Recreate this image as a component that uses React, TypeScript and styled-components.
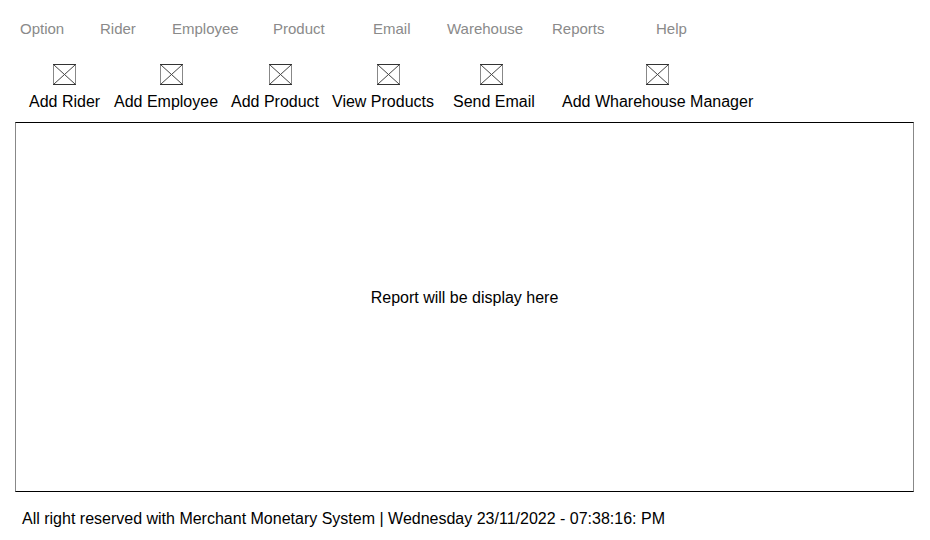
import React from "react";
import styled, { createGlobalStyle } from "styled-components";

const Global = createGlobalStyle`
  html, body { margin: 0; padding: 0; background: #ffffff; }
  body { font-family: "Liberation Sans", Arial, sans-serif; color: #000; }
`;

const Page = styled.div`
  width: 930px;
  height: 540px;
  display: flex;
  flex-direction: column;
  box-sizing: border-box;
  padding-top: 20px;
`;

const MenuBar = styled.nav`
  display: grid;
  grid-template-columns: 80px 72px 101px 100px 74px 105px 104px auto;
  padding-left: 20px;
  font-size: 15px;
  line-height: 17px;
  color: #8a8a8a;
`;

const MenuItem = styled.span`
  white-space: nowrap;
`;

const Toolbar = styled.div`
  display: grid;
  grid-template-columns: 85px 117px 101px 121px 109px auto;
  padding-left: 29px;
  margin-top: 27px;
`;

const ToolButton = styled.div`
  justify-self: start;
  display: flex;
  flex-direction: column;
  align-items: center;
  gap: 8px;
  cursor: default;
`;

const IconWrap = styled.div<{ $dx: number }>`
  width: 23px;
  height: 21px;
  margin-left: ${(p) => (p.$dx > 0 ? p.$dx * 2 : 0)}px;
  margin-right: ${(p) => (p.$dx < 0 ? -p.$dx * 2 : 0)}px;
  display: flex;
`;

const Label = styled.span`
  font-size: 16px;
  line-height: 18px;
  white-space: nowrap;
`;

const ReportBox = styled.section`
  margin: 11px 0 0 15px;
  width: 899px;
  height: 370px;
  box-sizing: border-box;
  border-top: 1px solid #000;
  border-bottom: 1px solid #000;
  border-left: 1px solid #888;
  border-right: 1px solid #888;
  display: flex;
  align-items: center;
  justify-content: center;
  padding-bottom: 18px;
  font-size: 16px;
  line-height: 18px;
`;

const Footer = styled.footer`
  margin: 18px 0 0 22px;
  font-size: 16px;
  line-height: 18px;
  white-space: nowrap;
`;

const BrokenImage = () => (
  <svg width="23" height="21" viewBox="0 0 23 21" fill="none">
    <path d="M0.5 0 V21 M22.5 0 V21" stroke="#888" strokeWidth="1" />
    <path d="M0 0.5 H23 M0 20.5 H23" stroke="#333" strokeWidth="1" />
    <path d="M1 1 L22 20 M22 1 L1 20" stroke="#444" strokeWidth="1" />
  </svg>
);

const menu = ["Option", "Rider", "Employee", "Product", "Email", "Warehouse", "Reports", "Help"];

const tools: { label: string; dx: number }[] = [
  { label: "Add Rider", dx: 0 },
  { label: "Add Employee", dx: 5 },
  { label: "Add Product", dx: 5 },
  { label: "View Products", dx: 6 },
  { label: "Send Email", dx: -2 },
  { label: "Add Wharehouse Manager", dx: 0 },
];

export default function App() {
  return (
    <>
      <Global />
      <Page>
        <MenuBar>
          {menu.map((m) => (
            <MenuItem key={m}>{m}</MenuItem>
          ))}
        </MenuBar>
        <Toolbar>
          {tools.map((t) => (
            <ToolButton key={t.label}>
              <IconWrap $dx={t.dx}>
                <BrokenImage />
              </IconWrap>
              <Label>{t.label}</Label>
            </ToolButton>
          ))}
        </Toolbar>
        <ReportBox>Report will be display here</ReportBox>
        <Footer>
          All right reserved with Merchant Monetary System | Wednesday 23/11/2022 - 07:38:16: PM
        </Footer>
      </Page>
    </>
  );
}
